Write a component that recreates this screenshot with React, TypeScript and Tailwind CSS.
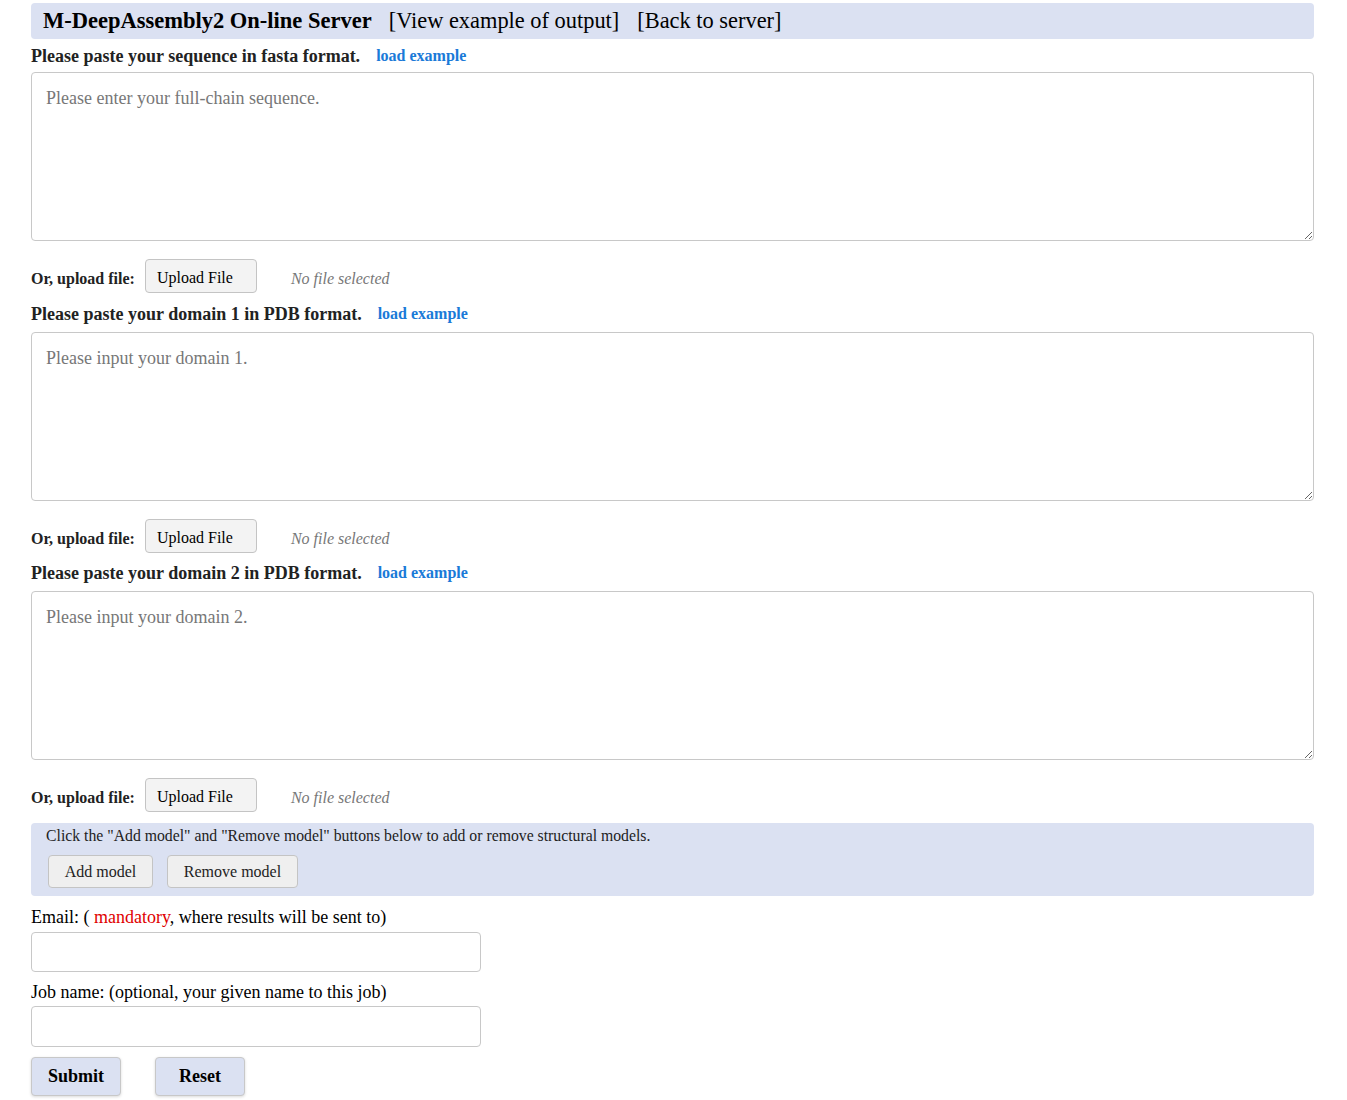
import React from "react";

const serif = { fontFamily: '"Liberation Serif", "Times New Roman", serif' };

function UploadRow() {
  return (
    <div className="flex items-center h-[34px] mt-[18px]">
      <span className="mt-[5px] font-bold text-[16px] text-[#222]">Or, upload file:</span>
      <button className="ml-[10px] w-[112px] h-[34px] text-left pl-[11px] pt-[4px] text-[16px] text-black bg-[#f3f3f3] border border-[#c4c4c4] rounded-[4px]">
        Upload File
      </button>
      <span className="mt-[5px] ml-[34px] italic text-[16px] text-[#777]">No file selected</span>
    </div>
  );
}

function Section({ label, placeholder, first }: { label: string; placeholder: string; first?: boolean }) {
  return (
    <div>
      <div className={`flex items-center h-[22px] ${first ? "mt-[6px]" : "mt-[10px]"}`}>
        <span className="font-bold text-[18px] text-[#222]">{label}</span>
        <a className="ml-[16px] font-bold text-[16px] text-[#1a7ad8] cursor-pointer">load example</a>
      </div>
      <textarea
        placeholder={placeholder}
        className={`block ${first ? "mt-[5px]" : "mt-[7px]"} w-full h-[169px] border border-[#c8c8c8] rounded-[4px] px-[14px] py-[12px] text-[18px] placeholder:text-[#777] outline-none`}
        style={serif}
      />
      <UploadRow />
    </div>
  );
}

export default function App() {
  return (
    <div className="px-[31px] pt-[3px] pb-4 w-[1345px] text-black" style={serif}>
      <div className="flex items-center h-[36px] bg-[#dbe1f2] rounded-[4px] pl-[12px]">
        <span className="font-bold text-[22.5px]">M-DeepAssembly2 On-line Server</span>
        <a className="ml-[17px] text-[22.4px] cursor-pointer">[View example of output]</a>
        <a className="ml-[18px] text-[22.4px] cursor-pointer">[Back to server]</a>
      </div>
      <Section first label="Please paste your sequence in fasta format." placeholder="Please enter your full-chain sequence." />
      <Section label="Please paste your domain 1 in PDB format." placeholder="Please input your domain 1." />
      <div className="-mt-[1px]">
        <Section label="Please paste your domain 2 in PDB format." placeholder="Please input your domain 2." />
      </div>

      <div className="mt-[11px] bg-[#dbe1f2] rounded-[4px] px-[15px] pt-[3px] h-[73px]">
        <div className="text-[15.75px] leading-[20px] text-[#222]">
          Click the "Add model" and "Remove model" buttons below to add or remove structural models.
        </div>
        <div className="flex gap-[14px] mt-[9px] ml-[2px]">
          <button className="h-[33px] w-[105px] bg-[#efefef] border border-[#c4c4c4] rounded-[4px] text-[16px] text-[#222]">
            Add model
          </button>
          <button className="h-[33px] w-[131px] bg-[#efefef] border border-[#c4c4c4] rounded-[4px] text-[16px] text-[#222]">
            Remove model
          </button>
        </div>
      </div>

      <div className="mt-[9px] text-[18px] leading-[24px]">
        Email: ( <span className="text-[#e00000]">mandatory</span>, where results will be sent to)
      </div>
      <input className="block mt-[3px] w-[450px] h-[40px] border border-[#c8c8c8] rounded-[4px] outline-none" />
      <div className="mt-[8px] text-[18px] leading-[24px]">Job name: (optional, your given name to this job)</div>
      <input className="block mt-[2px] w-[450px] h-[41px] border border-[#c8c8c8] rounded-[4px] outline-none" />
      <div className="flex gap-[34px] mt-[10px]">
        <button className="w-[90px] h-[39px] bg-[#dbe1f2] border border-[#c8c8c8] rounded-[4px] font-bold text-[18px] shadow-[0_1px_3px_rgba(0,0,0,0.15)]">
          Submit
        </button>
        <button className="w-[90px] h-[39px] bg-[#dbe1f2] border border-[#c8c8c8] rounded-[4px] font-bold text-[18px] shadow-[0_1px_3px_rgba(0,0,0,0.15)]">
          Reset
        </button>
      </div>
    </div>
  );
}
